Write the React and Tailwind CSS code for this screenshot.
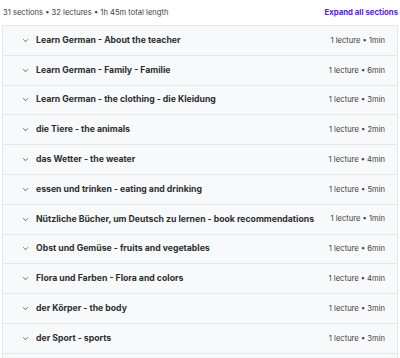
import React from "react";

const sections = [
  ["Learn German - About the teacher", "1 lecture • 1min"],
  ["Learn German - Family - Familie", "1 lecture • 6min"],
  ["Learn German - the clothing - die Kleidung", "1 lecture • 3min"],
  ["die Tiere - the animals", "1 lecture • 2min"],
  ["das Wetter - the weater", "1 lecture • 4min"],
  ["essen und trinken - eating and drinking", "1 lecture • 5min"],
  ["Nützliche Bücher, um Deutsch zu lernen - book recommendations", "1 lecture • 1min"],
  ["Obst und Gemüse - fruits and vegetables", "1 lecture • 6min"],
  ["Flora und Farben - Flora and colors", "1 lecture • 4min"],
  ["der Körper - the body", "1 lecture • 3min"],
  ["der Sport - sports", "1 lecture • 3min"],
];

function Chevron() {
  return (
    <svg width="7" height="7" viewBox="0 0 24 24" fill="none" stroke="#2d2f31" strokeWidth="2.5" strokeLinecap="round" strokeLinejoin="round">
      <path d="M5 9l7 7 7-7" />
    </svg>
  );
}

export default function App() {
  return (
    <div className="w-[400px] h-[358px] overflow-hidden bg-white font-['Inter',sans-serif] text-[#2d2f31]">
      <div className="flex items-center justify-between pl-[3px] pr-[2px] h-[25px]">
        <span className="text-[7.6px] text-[#3e4143]">31 sections • 32 lectures • 1h 45m total length</span>
        <span className="text-[7.8px] font-bold text-[#5624d0]">Expand all sections</span>
      </div>
      <div className="mx-[2px] border-x border-t border-[#e4e6e8]">
        {sections.map(([title, meta], i) => (
          <div
            key={i}
            className="flex items-center h-[29.8px] bg-[#f7f9fa] border-b border-[#e4e6e8] pl-[19px] pr-[12px]"
          >
            <Chevron />
            <span className="ml-[7px] flex-1 text-[8.7px] font-bold truncate">{title}</span>
            <span className="text-[7.6px] text-[#3e4143] ml-2 whitespace-nowrap">{meta}</span>
          </div>
        ))}
        <div className="h-[10px] bg-[#f7f9fa]" />
      </div>
    </div>
  );
}
